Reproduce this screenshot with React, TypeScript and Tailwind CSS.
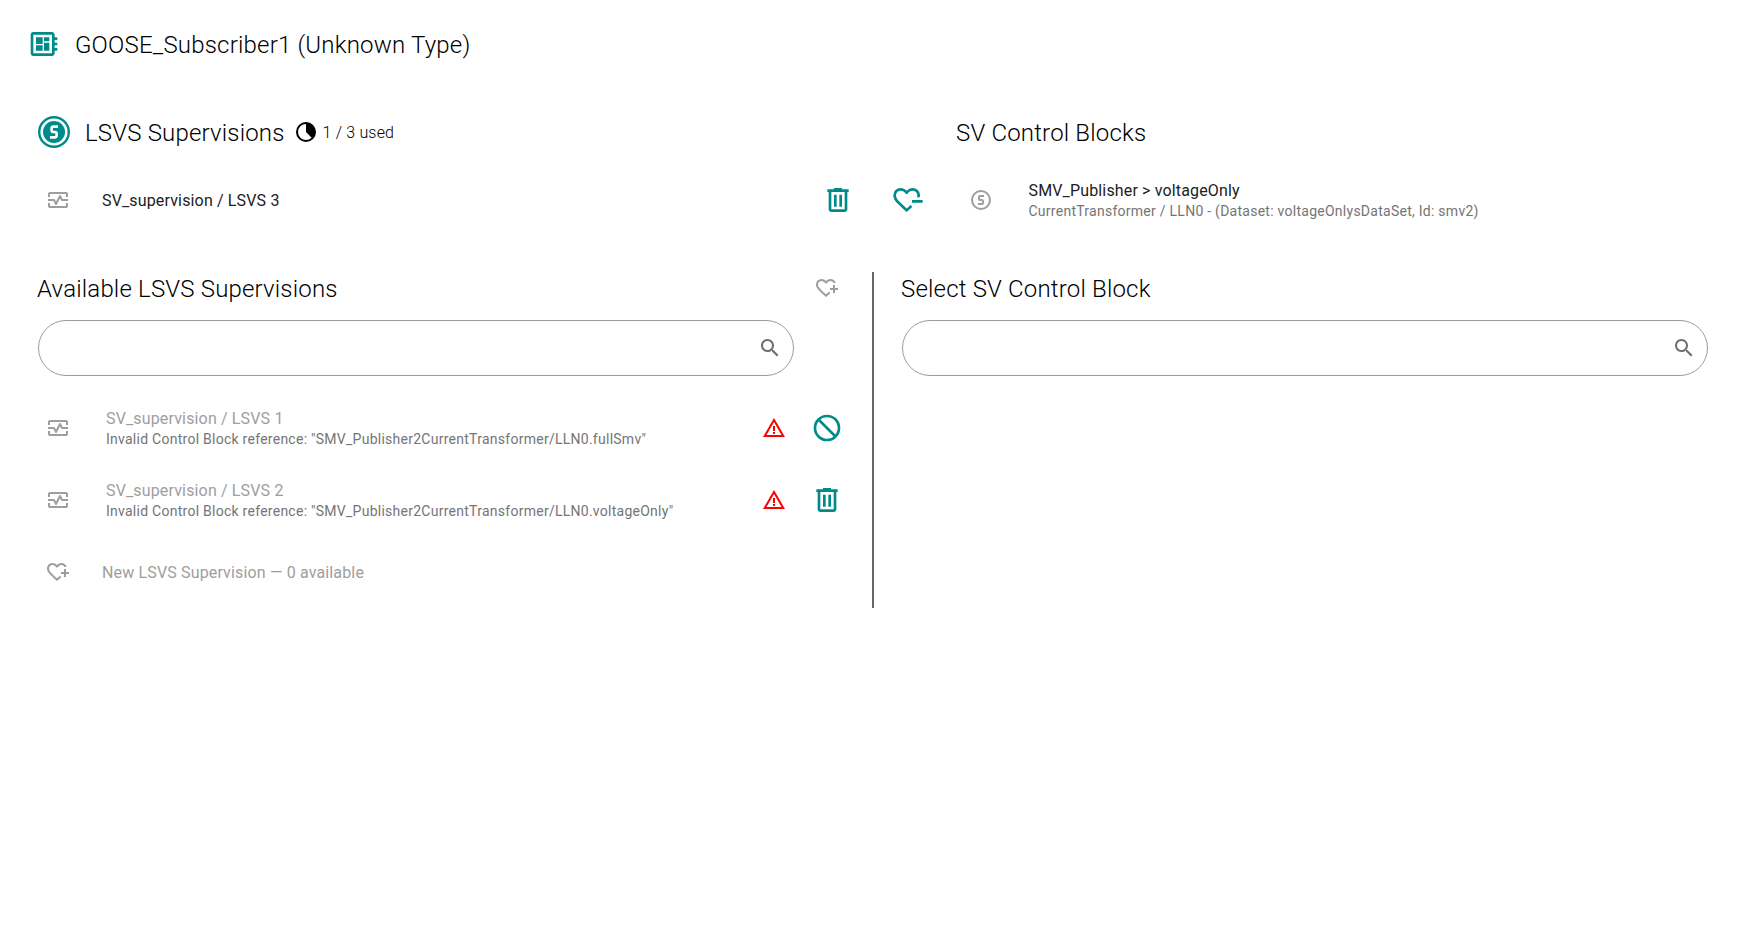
import React from "react";

type IconProps = { className?: string };
type GlyphProps = IconProps & { d: string; symbols?: boolean };

function Glyph({ d, symbols, className = "size-6" }: GlyphProps) {
  return (
    <svg viewBox={symbols ? "0 -960 960 960" : "0 0 24 24"} fill="currentColor" className={`block shrink-0 ${className}`} aria-hidden="true">
      <path d={d} />
    </svg>
  );
}

const paths = {
  board:
    "M22 9V7h-2V5c0-1.1-.9-2-2-2H4c-1.1 0-2 .9-2 2v14c0 1.1.9 2 2 2h14c1.1 0 2-.9 2-2v-2h2v-2h-2v-2h2v-2h-2V9h2zm-4 10H4V5h14v14zM6 13h5v4H6v-4zm6-6h4v3h-4V7zM6 7h5v5H6V7zm6 4h4v6h-4v-6z",
  trash:
    "M7 21q-.825 0-1.412-.587T5 19V6H4V4h5V3h6v1h5v2h-1v13q0 .825-.587 1.413T17 21zM17 6H7v13h10zM9 17h2V8H9zm4 0h2V8h-2z",
  heartMinus:
    "M440-120 313-234q-72-65-123.5-116t-85-96q-33.5-45-49-87T40-621q0-94 63-156.5T260-840q52 0 99 22t81 62q34-40 81-62t99-22q84 0 153 59t69 160q0 14-2 29.5t-6 31.5h-85q5-18 8-34t3-30q0-75-50-105.5T620-760q-51 0-88 27.5T463-660h-46q-31-45-70.5-72.5T260-760q-57 0-98.5 39.5T120-621q0 33 14 67t50 78.5q36 44.5 98 104T440-228q26-23 61-53t56-50l9 9 19.5 19.5L605-283l9 9q-22 20-56 49.5T498-172l-58 52Zm160-280v-80h320v80H600Z",
  heartPlus:
    "M440-120 313-234q-72-65-123.5-116t-85-96q-33.5-45-49-87T40-621q0-94 63-156.5T260-840q52 0 99 22t81 62q34-40 81-62t99-22q81 0 136 45.5T831-680h-85q-18-40-53-60t-73-20q-51 0-88 27.5T463-660h-46q-31-45-70.5-72.5T260-760q-57 0-98.5 39.5T120-621q0 33 14 67t50 78.5q36 44.5 98 104T440-228q26-23 61-53t56-50l9 9 19.5 19.5L605-283l9 9q-22 20-56 49.5T498-172l-58 52Zm280-160v-120H600v-80h120v-120h80v120h120v80H800v120h-80Z",
  monitor:
    "M80-600v-120q0-33 23.5-56.5T160-800h640q33 0 56.5 23.5T880-720v120h-80v-120H160v120H80Zm80 440q-33 0-56.5-23.5T80-240v-120h80v120h640v-120h80v120q0 33-23.5 56.5T800-160H160Zm240-120q11 0 21-5.500t15-16.500l124-248 44 88q5 11 15 16.500t21 5.500h240v-80H665l-69-138q-5-11-15-15.500t-21-4.500q-11 0-21 4.500T524-658L400-410l-44-88q-5-11-15-16.500t-21-5.500H80v80h215l69 138q5 11 15 16.500t21 5.500Z",
  search:
    "M15.5 14h-.79l-.28-.27C15.41 12.590 16 11.110 16 9.500 16 5.910 13.090 3 9.500 3S3 5.910 3 9.500 5.910 16 9.500 16c1.610 0 3.090-.59 4.230-1.570l.27.28v.79l5 4.990L20.490 19l-4.990-5zm-6 0C7.010 14 5 11.990 5 9.500S7.010 5 9.500 5 14 7.010 14 9.500 11.990 14 9.500 14z",
  warning:
    "M12 5.990 19.530 19H4.470L12 5.990M12 2 1 21h22L12 2zm1 14h-2v2h2v-2zm0-6h-2v5h2v-5z",
  block:
    "M12 2A10 10 0 1 0 12 22A10 10 0 1 0 12 2ZM20 12C20 13.850 19.370 15.550 18.310 16.900L7.100 5.690C8.450 4.630 10.150 4 12 4C16.420 4 20 7.580 20 12ZM4 12C4 10.150 4.630 8.450 5.690 7.100L16.900 18.310C15.550 19.370 13.850 20 12 20C7.580 20 4 16.420 4 12Z",
  sCircle:
    "M11 7H15V9H11V11H13A2 2 0 0 1 15 13V15A2 2 0 0 1 13 17H9V15H13V13H11A2 2 0 0 1 9 11V9A2 2 0 0 1 11 7M12 2A10 10 0 0 1 22 12A10 10 0 0 1 12 22A10 10 0 0 1 2 12A10 10 0 0 1 12 2M12 4A8 8 0 0 0 4 12A8 8 0 0 0 12 20A8 8 0 0 0 20 12A8 8 0 0 0 12 4Z",
};

function SampledValues() {
  return (
    <svg viewBox="0 0 32 32" className="block size-8 shrink-0" aria-hidden="true">
      <circle cx="16" cy="16" r="14.8" fill="none" stroke="currentColor" strokeWidth="2.400" />
      <circle cx="16" cy="16" r="11" fill="currentColor" />
      <path d="M20 10.600H15.400Q13.600 10.600 13.600 12.400V14.200Q13.600 16 15.400 16H16.800Q18.600 16 18.600 17.800V19.600Q18.600 21.400 16.800 21.400H12" fill="none" stroke="#fff" strokeWidth="2.600" />
    </svg>
  );
}

function UsageMeter() {
  return (
    <svg viewBox="0 0 24 24" className="block size-6 shrink-0 text-black" aria-hidden="true">
      <circle cx="12" cy="12" r="9" fill="none" stroke="currentColor" strokeWidth="2" />
      <path d="M12 12V3A9 9 0 0 1 18.400 18.400Z" fill="currentColor" />
    </svg>
  );
}

function SearchField({ className }: IconProps) {
  return (
    <label className={`flex h-14 items-center rounded-full border border-[#9b9b9b] pr-[11px] text-[#6e6e6e] ${className}`}>
      <input type="text" className="min-w-0 flex-1 bg-transparent pl-6 outline-none" />
      <Glyph d={paths.search} />
    </label>
  );
}

const heading = "text-2xl leading-8 font-light tracking-[0.18px] text-black";

function SupervisionRow({ title, detail, action }: { title: string; detail: string; action: string }) {
  return (
    <li className="flex h-[72px] items-center pl-2">
      <Glyph d={paths.monitor} symbols className="size-6 text-[#9e9e9e]" />
      <div className="ml-9 flex-1 pt-0.5">
        <div className="text-base leading-5 tracking-[0.15px] text-[#9e9e9e]">{title}</div>
        <div className="text-sm leading-5 tracking-[0.26px] text-[#757575]">{detail}</div>
      </div>
      <Glyph d={paths.warning} className="size-6 text-[#ff0000]" />
      <Glyph d={action} className="ml-[25.5px] size-8 text-[#008b8b]" />
    </li>
  );
}

export default function App() {
  return (
    <main className="h-[933px] w-[1745px] overflow-hidden bg-white font-['Roboto',sans-serif] text-[#212121]">
      <h1 className="flex h-[88px] items-center pl-7 text-2xl font-light tracking-[0.2px] text-black">
        <Glyph d={paths.board} className="size-8 text-[#008b8b]" />
        <span className="ml-[15px] pt-0.5">GOOSE_Subscriber1 (Unknown Type)</span>
      </h1>

      <section>
        <div className="mt-7 flex h-8 items-center pl-[38px]">
          <div className="flex w-[918px] items-center text-[#008b8b]">
            <SampledValues />
            <h2 className={`ml-[15px] pt-0.5 ${heading}`}>LSVS Supervisions</h2>
            <div className="ml-[9px] flex items-center gap-[5px] text-base font-light tracking-[0.17px] text-black">
              <UsageMeter />
              <span className="pt-0.5">1 / 3 used</span>
            </div>
          </div>
          <h2 className={`pt-0.5 ${heading}`}>SV Control Blocks</h2>
        </div>
        <div className="mt-4 flex h-[72px] items-center pl-[46px]">
          <Glyph d={paths.monitor} symbols className="size-6 text-[#9e9e9e]" />
          <span className="ml-8 w-[720px] pt-0.5 text-base tracking-[0.15px]">SV_supervision / LSVS 3</span>
          <Glyph d={paths.trash} className="size-8 text-[#008b8b]" />
          <Glyph d={paths.heartMinus} symbols className="ml-[38px] size-8 text-[#008b8b]" />
          <Glyph d={paths.sCircle} className="ml-[45px] size-6 text-[#9e9e9e]" />
          <div className="ml-[35.5px] pt-0.5">
            <div className="text-base leading-5 tracking-[0.15px]">SMV_Publisher &gt; voltageOnly</div>
            <div className="text-sm leading-5 tracking-[0.26px] text-[#757575]">CurrentTransformer / LLN0 - (Dataset: voltageOnlysDataSet, Id: smv2)</div>
          </div>
        </div>
      </section>

      <section className="mt-9 flex h-[336px]">
        <div className="w-[872px] pl-[37px]">
          <div className="flex h-8 items-center">
            <h2 className={`w-[778px] pt-0.5 ${heading}`}>Available LSVS Supervisions</h2>
            <Glyph d={paths.heartPlus} symbols className="size-6 text-[#9e9e9e]" />
          </div>
          <SearchField className="mt-4 ml-px w-[756px]" />
          <ul className="mt-4 ml-px w-[805px]">
            <SupervisionRow title="SV_supervision / LSVS 1" detail={'Invalid Control Block reference: "SMV_Publisher2CurrentTransformer/LLN0.fullSmv"'} action={paths.block} />
            <SupervisionRow title="SV_supervision / LSVS 2" detail={'Invalid Control Block reference: "SMV_Publisher2CurrentTransformer/LLN0.voltageOnly"'} action={paths.trash} />
            <li className="flex h-[72px] items-center pl-2 text-base tracking-[0.15px] text-[#9e9e9e]">
              <Glyph d={paths.heartPlus} symbols />
              <span className="ml-8 pt-0.5">New LSVS Supervision — 0 available</span>
            </li>
          </ul>
        </div>
        <div className="w-0.5 bg-[#666666]" />
        <div className="pl-[27px]">
          <h2 className={`h-8 pt-px ${heading}`}>Select SV Control Block</h2>
          <SearchField className="mt-4 ml-px w-[806px]" />
        </div>
      </section>
    </main>
  );
}
